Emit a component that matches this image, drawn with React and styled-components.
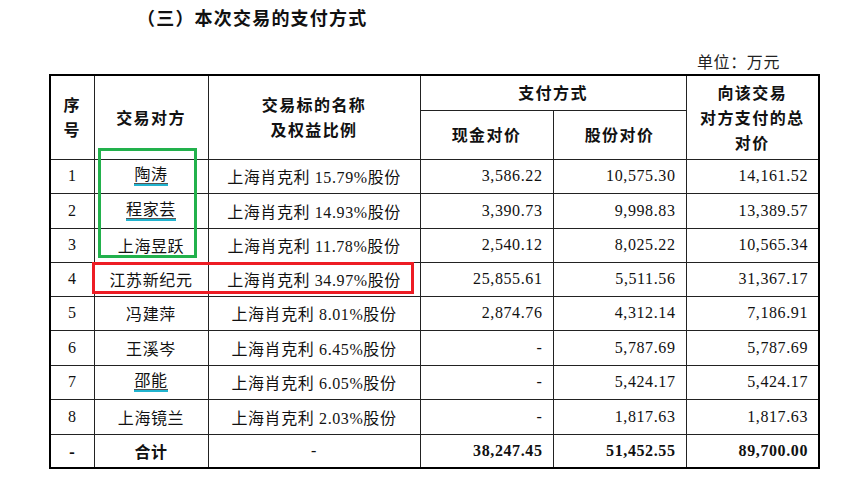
import React from "react";
import styled, { createGlobalStyle } from "styled-components";

const Global = createGlobalStyle`
  html, body { margin: 0; padding: 0; background: #fff; }
  body { width: 849px; height: 482px; overflow: hidden; color: #111; }
`;

const Page = styled.div`
  display: flex;
  flex-direction: column;
  padding-left: 49px;
`;

const Title = styled.h2`
  margin: 0;
  padding-left: 88px;
  height: 34px;
  line-height: 34px;
  font-family: "Noto Sans CJK SC", sans-serif;
  font-weight: 700;
  font-size: 18px;
  letter-spacing: 1.2px;
  color: #111;
`;

const Unit = styled.div`
  width: 769px;
  box-sizing: border-box;
  text-align: right;
  padding-right: 38px;
  margin-top: 17px;
  height: 23px;
  line-height: 23px;
  font-family: "Liberation Serif", "Noto Sans CJK SC", serif;
  font-size: 16px;
  letter-spacing: 0.6px;
  color: #222;
`;

const TableWrap = styled.div`
  position: relative;
  width: 769px;
`;

const Table = styled.table`
  border-collapse: collapse;
  table-layout: fixed;
  width: 769px;
  border: 2px solid #000;
  font-family: "Liberation Serif", "Noto Sans CJK SC", serif;
  font-size: 16px;
  letter-spacing: 0.6px;
  color: #111;
`;

const Th = styled.th`
  border: 1px solid #222;
  padding: 0;
  text-align: center;
  vertical-align: middle;
  font-family: "Noto Sans CJK SC", sans-serif;
  font-weight: 700;
  font-size: 16px;
  letter-spacing: 1.4px;
  line-height: 25px;
  color: #111;
`;

const Td = styled.td`
  border: 1px solid #222;
  padding: 0 ${(p) => (p.$num ? "10px" : "0")} 0 0;
  text-align: ${(p) => (p.$num ? "right" : "center")};
  vertical-align: middle;
  font-weight: ${(p) => (p.$bold ? 700 : 400)};
  font-family: ${(p) =>
    p.$bold && !p.$num
      ? `"Noto Sans CJK SC", sans-serif`
      : `"Liberation Serif", "Noto Sans CJK SC", serif`};
  white-space: nowrap;
`;

const Row = styled.tr`
  height: ${(p) => p.$h}px;
`;

const Linked = styled.span`
  display: inline-block;
  line-height: 18px;
  border-bottom: 2px solid #22b4cf;
  box-shadow: inset 0 -1px 0 #555;
`;

const Mark = styled.div`
  position: absolute;
  box-sizing: border-box;
  border: 3px solid ${(p) => p.$color};
  pointer-events: none;
`;

const rows = [
  ["1", "陶涛", true, "15.79", "3,586.22", "10,575.30", "14,161.52"],
  ["2", "程家芸", true, "14.93", "3,390.73", "9,998.83", "13,389.57"],
  ["3", "上海昱跃", false, "11.78", "2,540.12", "8,025.22", "10,565.34"],
  ["4", "江苏新纪元", false, "34.97", "25,855.61", "5,511.56", "31,367.17"],
  ["5", "冯建萍", false, "8.01", "2,874.76", "4,312.14", "7,186.91"],
  ["6", "王溪岑", false, "6.45", "-", "5,787.69", "5,787.69"],
  ["7", "邵能", true, "6.05", "-", "5,424.17", "5,424.17"],
  ["8", "上海镜兰", false, "2.03", "-", "1,817.63", "1,817.63"],
];

const heights = [34, 35, 34, 34, 34, 35, 34, 35, 34];

export default function App() {
  return (
    <>
      <Global />
      <Page>
        <Title>（三）本次交易的支付方式</Title>
        <Unit>单位：万元</Unit>
        <TableWrap>
          <Table>
            <colgroup>
              <col style={{ width: 44 }} />
              <col style={{ width: 114 }} />
              <col style={{ width: 212 }} />
              <col style={{ width: 133 }} />
              <col style={{ width: 133 }} />
              <col style={{ width: 133 }} />
            </colgroup>
            <thead>
              <Row $h={35}>
                <Th rowSpan={2}>
                  序<br />号
                </Th>
                <Th rowSpan={2}>交易对方</Th>
                <Th rowSpan={2}>
                  交易标的名称
                  <br />
                  及权益比例
                </Th>
                <Th colSpan={2}>支付方式</Th>
                <Th rowSpan={2}>
                  向该交易
                  <br />
                  对方支付的总
                  <br />
                  对价
                </Th>
              </Row>
              <Row $h={49}>
                <Th>现金对价</Th>
                <Th>股份对价</Th>
              </Row>
            </thead>
            <tbody>
              {rows.map((r, i) => (
                <Row key={r[0]} $h={heights[i]}>
                  <Td>{r[0]}</Td>
                  <Td>{r[2] ? <Linked>{r[1]}</Linked> : r[1]}</Td>
                  <Td>上海肖克利 {r[3]}%股份</Td>
                  <Td $num>{r[4]}</Td>
                  <Td $num>{r[5]}</Td>
                  <Td $num>{r[6]}</Td>
                </Row>
              ))}
              <Row $h={heights[8]}>
                <Td $bold>-</Td>
                <Td $bold>合计</Td>
                <Td>-</Td>
                <Td $num $bold>38,247.45</Td>
                <Td $num $bold>51,452.55</Td>
                <Td $num $bold>89,700.00</Td>
              </Row>
            </tbody>
          </Table>
          <Mark $color="#22b14c" style={{ left: 49, top: 74, width: 99, height: 110 }} />
          <Mark $color="#ed1c24" style={{ left: 43, top: 188, width: 322, height: 32 }} />
        </TableWrap>
      </Page>
    </>
  );
}
